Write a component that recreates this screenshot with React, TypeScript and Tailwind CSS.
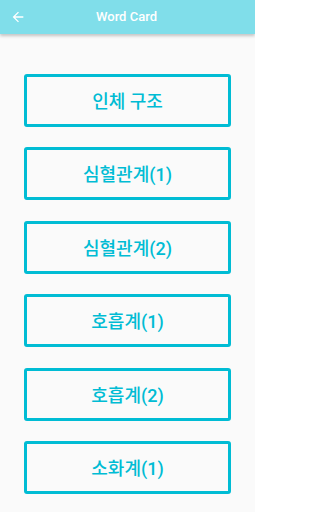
import React from 'react';

const TOPICS = ['인체 구조', '심혈관계(1)', '심혈관계(2)', '호흡계(1)', '호흡계(2)', '소화계(1)'];

const App: React.FC = () => {
  return (
    <div className="h-[512px] w-[255px] overflow-hidden bg-[#fafafa] font-['Roboto','Noto_Sans_CJK_KR',sans-serif]">
      {/* App bar */}
      <div className="relative z-10 flex h-[34px] items-center bg-[#80deea] pl-[10px] pr-3 shadow-[0_2px_3px_rgba(0,0,0,0.22)]">
        <svg width="16" height="16" viewBox="0 0 24 24" className="shrink-0">
          <path d="M20 11H7.83l5.59-5.59L12 4l-8 8 8 8 1.41-1.41L7.83 13H20v-2z" fill="#fff" />
        </svg>
        <p className="flex-1 pr-[16px] text-center text-[13px] font-medium text-white">Word Card</p>
      </div>

      {/* Topic list */}
      <div className="flex flex-col gap-[20.4px] px-[24px] pt-[40px]">
        {TOPICS.map(t => (
          <button key={t} type="button"
            className="flex h-[53px] items-center justify-center rounded-[3px] border-[3px] border-[#00bcd4] bg-[#fafafa] pt-[2px] text-[18px] font-medium text-[#00bcd4]">
            {t}
          </button>
        ))}
      </div>
    </div>
  );
};

export default App;
